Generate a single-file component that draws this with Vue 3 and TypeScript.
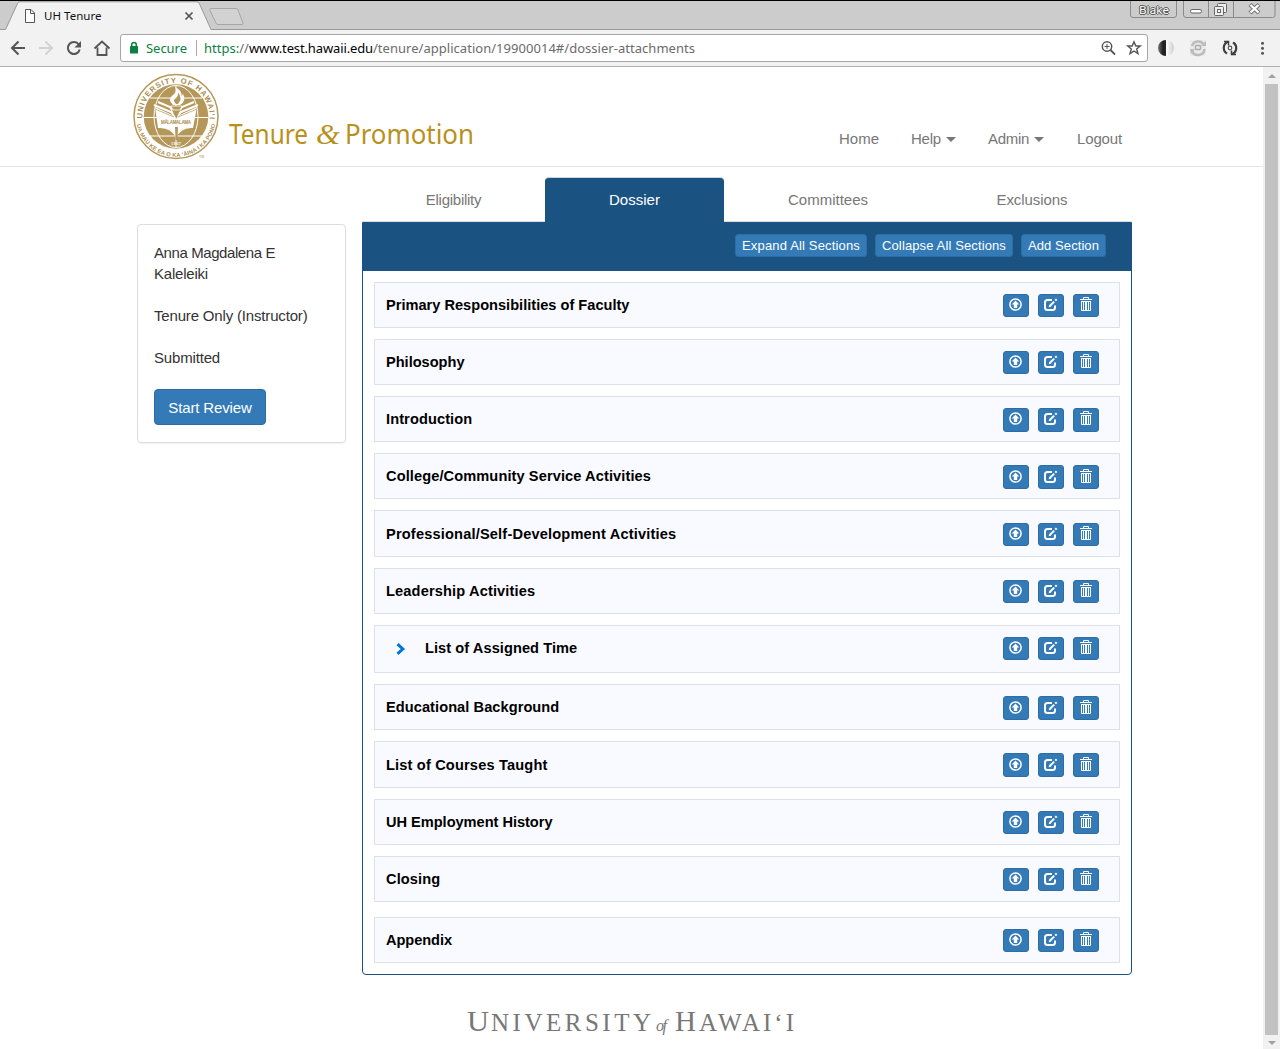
<script setup lang="ts">
import type { Directive } from 'vue'

interface Section {
  title: string
  width: number
  nested?: boolean
  last?: boolean
}

const sections: Section[] = [
  { title: 'Primary Responsibilities of Faculty', width: 243.5 },
  { title: 'Philosophy', width: 78.5 },
  { title: 'Introduction', width: 86.3 },
  { title: 'College/Community Service Activities', width: 265 },
  { title: 'Professional/Self-Development Activities', width: 290.3 },
  { title: 'Leadership Activities', width: 149.3 },
  { title: 'List of Assigned Time', width: 152.3, nested: true },
  { title: 'Educational Background', width: 173.3 },
  { title: 'List of Courses Taught', width: 161.5 },
  { title: 'UH Employment History', width: 166.5 },
  { title: 'Closing', width: 54.3 },
  { title: 'Appendix', width: 66, last: true },
]

const nav = [
  { label: 'Home', width: 40, menu: false },
  { label: 'Help', width: 30, menu: true },
  { label: 'Admin', width: 41, menu: true },
  { label: 'Logout', width: 45, menu: false },
]

const tabs = [
  { label: 'Eligibility', width: 55.5, cls: 'eligibility' },
  { label: 'Dossier', width: 51, cls: 'active' },
  { label: 'Committees', width: 80, cls: 'committees' },
  { label: 'Exclusions', width: 71, cls: 'exclusions' },
]

const actions = [
  { label: 'Expand All Sections', width: 118 },
  { label: 'Collapse All Sections', width: 124 },
  { label: 'Add Section', width: 71 },
]

// Tracks a label out (or in) so that it fills the given width in pixels.
const vFit: Directive<HTMLElement, number> = {
  mounted(el, { value }) {
    const count = (el.textContent ?? '').length
    const natural = el.getBoundingClientRect().width
    el.style.letterSpacing = `${(value - natural) / count}px`
  },
}
</script>

<template>
  <div class="window">
    <div class="tabstrip">
      <svg class="tab-shapes" width="1280" height="30" viewBox="0 0 1280 30">
        <path d="M0 29.5H6L17.5 3.500Q18.500 2 20 2H197Q198.500 2 199.300 3.500L211 29.500H1280V30H0Z" fill="#f2f2f2" />
        <path d="M0 29.500H5.500L17.500 3.500Q18.300 1.800 20 1.800H197Q198.500 1.800 199.300 3.500L211 29.500H1280" fill="none" stroke="#999" />
        <path d="M211 8.500H236Q237.500 8.500 238 10L243 23Q243.300 24.500 242 24.500H218Q216.500 24.500 216 23L210 10.500Q209.300 8.500 211 8.500Z" fill="#d2d2d2" stroke="#a6a6a6" />
        <path d="M25.500 9.500H31L34.500 13V22.500H25.500ZM30.500 9.500V13.500H34.500" fill="#fff" stroke="#555" />
        <path d="M185.500 12.500L192.500 19.500M192.500 12.500L185.500 19.500" stroke="#555" stroke-width="1.700" />
        <path d="M1130.500 1V15Q1130.500 17.500 1133 17.500H1174Q1176.500 17.500 1176.500 15V1M1183.500 1V15Q1183.500 17.500 1186 17.500H1272.500Q1275 17.500 1275 15V1M1208.500 1V17M1233.500 1V17" fill="none" stroke="#8a8a8a" />
        <rect x="1190.500" y="9.500" width="11" height="3.500" rx="1.500" fill="#fff" stroke="#666" />
        <rect x="1217.500" y="3.500" width="9" height="9" rx="1" fill="#eee" stroke="#666" />
        <rect x="1214.500" y="6.500" width="9" height="9" rx="1" fill="#eee" stroke="#666" />
        <rect x="1217.500" y="9.500" width="3" height="3" fill="#fff" stroke="#666" />
        <path d="M1250 4.500L1259 13M1259 4.500L1250 13" stroke="#777" stroke-width="4.300" />
        <path d="M1250.500 5L1258.500 12.500M1258.500 5L1250.500 12.500" stroke="#fff" stroke-width="2.300" />
      </svg>
      <span class="page-title"><span v-fit="57.5">UH Tenure</span></span>
      <span class="user"><span v-fit="30">Blake</span></span>
    </div>

    <div class="toolbar">
      <svg class="nav-icons" width="120" height="36" viewBox="0 30 120 36" fill="none">
        <path d="M25 48H12M18.500 41.500L12 48L18.500 54.500" stroke="#555" stroke-width="2" />
        <path d="M39 48H52M45.500 41.500L52 48L45.500 54.500" stroke="#d2d2d2" stroke-width="2" />
        <path d="M78.800 44.500A6 6 0 1 0 79.700 49.500" stroke="#555" stroke-width="2" />
        <path d="M81 41V47.500H74.500Z" fill="#555" />
        <path d="M94.500 48.500L102 41.500L109.500 48.500M97.500 47.500V55H106.500V47.500" stroke="#555" stroke-width="1.800" />
      </svg>
      <div class="address">
        <svg class="lock" width="10" height="14" viewBox="0 0 10 14">
          <rect x="1" y="5" width="8" height="7.500" rx=".5" fill="#0b8043" />
          <path d="M2.700 6V4A2.300 2.500 0 0 1 7.300 4V6" fill="none" stroke="#0b8043" stroke-width="1.500" />
        </svg>
        <span v-fit="41" class="green">Secure</span>
        <i class="divider"></i>
        <span class="url"><span v-fit="45" class="grey"><span class="green">https:</span>//</span><span v-fit="124" class="host">www.test.hawaii.edu</span><span v-fit="322" class="grey">/tenure/application/19900014#/dossier-attachments</span></span>
        <svg class="field-icons" width="46" height="20" viewBox="1098 38 46 20" fill="none" stroke="#555">
          <circle cx="1107" cy="46.500" r="4.700" stroke-width="1.500" />
          <path d="M1110.500 50L1115 54.500" stroke-width="1.800" />
          <path d="M1104.500 46.500H1109.500M1107 44V49" />
          <path d="M1134 41.800L1135.800 46H1140.200L1136.700 48.900L1138 53.700L1134 51L1130 53.700L1131.300 48.900L1127.800 46H1132.200Z" stroke-width="1.400" />
        </svg>
      </div>
      <svg class="extensions" width="132" height="36" viewBox="1148 30 132 36" fill="none">
        <defs>
          <linearGradient id="dark"><stop stop-color="#777" /><stop offset=".6" stop-color="#222" /></linearGradient>
          <linearGradient id="pale"><stop stop-color="#fff" /><stop offset="1" stop-color="#ccc" /></linearGradient>
        </defs>
        <path d="M1166 40A8 8 0 0 0 1166 56Z" fill="url(#dark)" />
        <path d="M1166 40A8 8 0 0 1 1166 56Z" fill="url(#pale)" />
        <rect x="1190" y="40" width="16" height="16" fill="#eaeaea" />
        <path d="M1192 46A6.500 6.500 0 0 1 1204 45M1204.500 49A6.500 6.500 0 0 1 1192 51" stroke="#bbb" stroke-width="2.500" />
        <path d="M1201 46H1206V41M1190 49H1195L1191 54" fill="#bbb" />
        <rect x="1195.500" y="45.500" width="5" height="4" rx="1" stroke="#aaa" stroke-width="1.500" />
        <path d="M1228 41.800A6.500 6.500 0 0 0 1227 53.500M1232 54.200A6.500 6.500 0 0 0 1233 42.500" stroke="#3d3d3d" stroke-width="2.200" />
        <path d="M1224 41.500H1228.500V45.500M1236 54.500H1231.500V50.500" stroke="#3d3d3d" stroke-width="1.500" />
        <circle cx="1230" cy="48" r="1.800" stroke="#555" stroke-width="1.200" />
        <circle cx="1262.500" cy="43.300" r="1.500" fill="#555" />
        <circle cx="1262.500" cy="48.300" r="1.500" fill="#555" />
        <circle cx="1262.500" cy="53.300" r="1.500" fill="#555" />
      </svg>
    </div>

    <div class="viewport">
      <div class="page">
        <header>
          <svg class="brand" width="350" height="98" viewBox="130 67 350 98">
            <defs>
              <path id="upper" d="M142.660 121.500A33.700 33.700 0 1 1 209.340 121.500" />
              <path id="lower" d="M136.400 122.500A40 40 0 0 0 215.600 122.500" />
            </defs>
            <circle cx="176" cy="116.500" r="42" fill="#fff" stroke="#b5975a" stroke-width="1.500" />
            <circle cx="176" cy="116.500" r="32.300" fill="#b5975a" />
            <g fill="none" stroke="#fff" stroke-width="1">
              <ellipse cx="176" cy="116.500" rx="22" ry="31" />
              <path d="M144 117.500H208M176 85V148M150 98H202M150 136H202" />
            </g>
            <path d="M155 107L172 115L176 119L180 115L197 107L193 128Q181 127 176 138Q171 127 158 128Z" fill="#fff" />
            <path d="M154 105L171 112L175 117M198 105L181 112L177 117M158 102L170 107L174 113M194 102L182 107L178 113" stroke="#fff" stroke-width="2" fill="none" />
            <path d="M155 109L174 117M197 109L178 117" stroke="#b5975a" stroke-width=".7" />
            <path d="M172 110H181L178 114L177 118H176L174 114ZM175 127H178L177.500 140H175.500Z" fill="#b5975a" />
            <path d="M171 106H182L180 110H173Z" fill="#b5975a" stroke="#fff" stroke-width=".8" />
            <path d="M173 105Q167 99 173 95Q178 91 175 87Q183 91 181 96L183 94Q187 101 180 105Z" fill="#fff" />
            <path d="M176 104Q172 100 176 98Q179 95 178 92Q183 99 178 104Z" fill="#b5975a" />
            <g font-family="'Liberation Sans', Arial, sans-serif" font-weight="bold" fill="#ab8b4c">
              <text font-size="7.600"><textPath href="#upper" startOffset="3" textLength="110">UNIVERSITY OF HAWAIʻI</textPath></text>
              <text font-size="5.600"><textPath href="#lower" startOffset="2" textLength="110">UA MAU KE EA O KA ʻĀINA I KA PONO</textPath></text>
              <text x="161" y="124" font-size="4.500" textLength="30">MĀLAMALAMA</text>
              <text x="171" y="145" font-size="4" fill="#fff" textLength="10">1907</text>
              <text x="199" y="157.500" font-size="3.500" fill="#cdb98e">TM</text>
            </g>
            <g fill="#b8911c" font-family="'Noto Sans', sans-serif" font-size="28">
              <text x="229" y="144" textLength="79" lengthAdjust="spacingAndGlyphs">Tenure</text>
              <text x="316" y="144" font-family="'Liberation Serif', serif" font-style="italic" font-size="29" textLength="24" lengthAdjust="spacingAndGlyphs">&amp;</text>
              <text x="345" y="144" textLength="129" lengthAdjust="spacingAndGlyphs">Promotion</text>
            </g>
          </svg>
          <nav>
            <a v-for="item in nav" :key="item.label"><span v-fit="item.width">{{ item.label }}</span><b v-if="item.menu" class="caret"></b></a>
          </nav>
        </header>

        <main>
          <aside>
            <p class="name"><span v-fit="121">Anna Magdalena E</span><br /><span v-fit="54">Kaleleiki</span></p>
            <p><span v-fit="153.5">Tenure Only (Instructor)</span></p>
            <p><span v-fit="66">Submitted</span></p>
            <button class="review"><span v-fit="83.5">Start Review</span></button>
          </aside>

          <div class="content">
            <div class="tabs">
              <a v-for="tab in tabs" :key="tab.label" :class="tab.cls"><span v-fit="tab.width">{{ tab.label }}</span></a>
            </div>
            <div class="panel">
              <div class="panel-head">
                <button v-for="action in actions" :key="action.label"><span v-fit="action.width">{{ action.label }}</span></button>
              </div>
              <div class="rows">
                <div v-for="section in sections" :key="section.title" class="row" :class="{ nested: section.nested, last: section.last }">
                  <svg v-if="section.nested" class="chevron" width="10" height="12" viewBox="0 0 10 12">
                    <path d="M1.500 1.200L6.800 6L1.500 10.800" fill="none" stroke="#0275d8" stroke-width="3" />
                  </svg>
                  <span class="title"><span v-fit="section.width">{{ section.title }}</span></span>
                  <div class="icons">
                    <button>
                      <svg width="26" height="23" viewBox="0 0 26 23">
                        <circle cx="12.500" cy="10.500" r="5.600" fill="none" stroke="#fff" stroke-width="1.500" />
                        <path d="M12.500 6.500L16.300 10.500H14.200V14H10.800V10.500H8.700Z" fill="#fff" />
                      </svg>
                    </button>
                    <button>
                      <svg width="26" height="23" viewBox="0 0 26 23" fill="none" stroke="#fff">
                        <path d="M14 6H9.500Q7 6 7 8.500V13.500Q7 16 9.500 16H14.500Q17 16 17 13.500V11.500" stroke-width="2" />
                        <path d="M12 11.800L16.200 7.600" stroke-width="2" />
                        <path d="M10.700 13.300L11.200 10.800L13.300 12.800Z" fill="#fff" stroke="none" />
                        <path d="M17.300 5.200L18.700 6.600" stroke-width="2" />
                      </svg>
                    </button>
                    <button>
                      <svg width="26" height="23" viewBox="0 0 26 23" fill="none" stroke="#fff">
                        <path d="M7 5.500H19M10.500 5V3.500H15.500V5" />
                        <path d="M8.500 7V16.500H17.500V7M10.500 7.500V16M12.500 7.500V16M13.500 7.500V16M15.500 7.500V16M8 7.500H18" />
                      </svg>
                    </button>
                  </div>
                </div>
              </div>
            </div>
          </div>
        </main>

        <footer>
          <svg width="340" height="44" viewBox="460 1000 340 44" fill="#777" font-family="'Liberation Serif', serif">
            <text x="467" y="1031" font-size="29.500" textLength="22" lengthAdjust="spacingAndGlyphs">U</text>
            <text x="491" y="1031" font-size="25" textLength="160">NIVERSITY</text>
            <text x="656" y="1031" font-size="16" font-style="italic" textLength="11">of</text>
            <text x="675" y="1031" font-size="29.500" textLength="21" lengthAdjust="spacingAndGlyphs">H</text>
            <text x="699" y="1031" font-size="25" textLength="95">AWAIʻI</text>
          </svg>
        </footer>
      </div>
      <div class="scrollbar">
        <i class="arrow up"></i>
        <i class="thumb"></i>
        <i class="arrow down"></i>
      </div>
    </div>
  </div>
</template>

<style>
body {
  margin: 0;
  background: #fff;
  overflow: hidden;
}
</style>

<style scoped>
* {
  box-sizing: border-box;
}
.window {
  width: 1280px;
  height: 1049px;
  overflow: hidden;
  display: flex;
  flex-direction: column;
  background: #fff;
  font: 15px/21px 'Liberation Sans', Arial, sans-serif;
  color: #333;
}
span {
  white-space: nowrap;
}
svg {
  display: block;
  flex: none;
}
.tabstrip {
  position: relative;
  height: 30px;
  flex: none;
  background: #ccc;
  border-top: 1px solid #000;
  display: flex;
  justify-content: space-between;
  font: 11.5px/14px 'Noto Sans', sans-serif;
  color: #111;
}
.tab-shapes {
  position: absolute;
  left: 0;
  top: -1px;
  clip-path: inset(1px 0 0 0);
}
.page-title {
  position: relative;
  margin: 8px 0 0 44px;
}
.user {
  position: relative;
  margin: 2px 111px 0 0;
  color: #fff;
  text-shadow: 1px 0 #555, -1px 0 #555, 0 1px #555, 0 -1px #555;
}
.toolbar {
  height: 37px;
  flex: none;
  display: flex;
  background: #f2f2f2;
  border-bottom: 1px solid #b0b0b0;
}
.address {
  width: 1028px;
  height: 28px;
  margin-top: 4px;
  padding-left: 8px;
  border: 1px solid #a6a6a6;
  border-radius: 3px;
  background: #fff;
  display: flex;
  align-items: center;
  font: 13px/26px 'Noto Sans', sans-serif;
}
.lock {
  margin-right: 7px;
}
.green {
  color: #0b8043;
}
.grey {
  color: #6b6b6b;
}
.grey .green {
  color: #0b8043;
}
.host {
  color: #000;
}
.divider {
  width: 1px;
  height: 16px;
  margin: 0 7px 0 9px;
  background: #aaa;
}
.field-icons {
  margin: 0 3px 0 auto;
}
.viewport {
  flex: 1;
  min-height: 0;
  display: flex;
}
.page {
  width: 1263px;
}
header {
  height: 100px;
  border-bottom: 1px solid #e4e4e4;
  display: flex;
  align-items: flex-start;
  padding: 0 141px 0 130px;
}
nav {
  display: flex;
  flex: 1;
  justify-content: flex-end;
  gap: 32px;
  padding-top: 61px;
  color: #777;
}
nav a {
  display: flex;
  align-items: center;
  height: 21px;
}
nav a:last-child {
  margin-left: 1px;
}
.caret {
  margin: 2px 0 0 5px;
  border: 5px solid transparent;
  border-top: 5px solid #777;
  border-bottom: 0;
}
main {
  display: flex;
  padding-left: 137px;
}
aside {
  width: 209px;
  height: 219px;
  margin: 57px 16px 0 0;
  padding: 17px 16px 0;
  border: 1px solid #ddd;
  border-radius: 4px;
  box-shadow: 0 1px 1px rgba(0, 0, 0, 0.05);
}
aside p {
  margin: 0 0 21px;
}
button {
  padding: 0;
  border: 1px solid #2e6da4;
  background: #337ab7;
  color: #fff;
  font-family: inherit;
}
.review {
  display: block;
  width: 112px;
  height: 36px;
  border-radius: 4px;
  font-size: 15px;
}
.content {
  width: 770px;
  padding-top: 10px;
}
.tabs {
  height: 45px;
  display: flex;
  color: #777;
}
.tabs a {
  height: 45px;
  text-align: center;
  line-height: 46px;
  border-bottom: 1px solid #ddd;
}
.tabs .eligibility {
  width: 183px;
}
.tabs .active {
  width: 179px;
  background: #1a5282;
  color: #fff;
  border: 0;
  border-top: 1px solid #ccd5dd;
  border-radius: 4px 4px 0 0;
  line-height: 44px;
}
.tabs .committees {
  width: 208px;
}
.tabs .exclusions {
  width: 200px;
}
.panel {
  height: 753px;
  border: 1px solid #1a5282;
  border-radius: 0 0 4px 4px;
}
.panel-head {
  height: 48px;
  background: #1a5282;
  display: flex;
  justify-content: flex-end;
  gap: 8px;
  padding: 11px 25px 0 0;
}
.panel-head button {
  height: 23px;
  padding: 0 6px;
  border-radius: 3px;
  font-size: 13px;
  line-height: 20px;
}
.rows {
  padding: 10.7px 11px 0;
}
.row {
  height: 46.2px;
  margin-bottom: 11px;
  border: 1px solid #dae1e9;
  background: #f8faff;
  display: flex;
  padding: 0 20px 0 11px;
}
.row.nested {
  height: 48.4px;
  padding-left: 21px;
}
.row.last {
  margin-top: 15px;
}
.chevron {
  margin: 17px 19px 0 0;
}
.title {
  padding-top: 12.19px;
  font-size: 14.6px;
  line-height: 21px;
  font-weight: bold;
  color: #000;
}
.icons {
  margin: 11.09px 0 0 auto;
  display: flex;
  align-items: flex-start;
  gap: 9px;
}
.icons button {
  width: 26px;
  height: 23.4px;
  border-radius: 3px;
}
.icons svg {
  margin: -0.92px -1px -1px;
}
footer {
  padding: 25px 0 0 460px;
}
.scrollbar {
  width: 17px;
  background: #f1f1f1;
  display: flex;
  flex-direction: column;
  align-items: center;
}
.arrow {
  border: 4px solid transparent;
}
.up {
  margin-top: 7px;
  border-top: 0;
  border-bottom-color: #a0a0a0;
}
.down {
  margin-top: 6px;
  border-bottom: 0;
  border-top-color: #a0a0a0;
}
.thumb {
  width: 13px;
  height: 951px;
  margin-top: 6px;
  background: #c1c1c1;
}
</style>
